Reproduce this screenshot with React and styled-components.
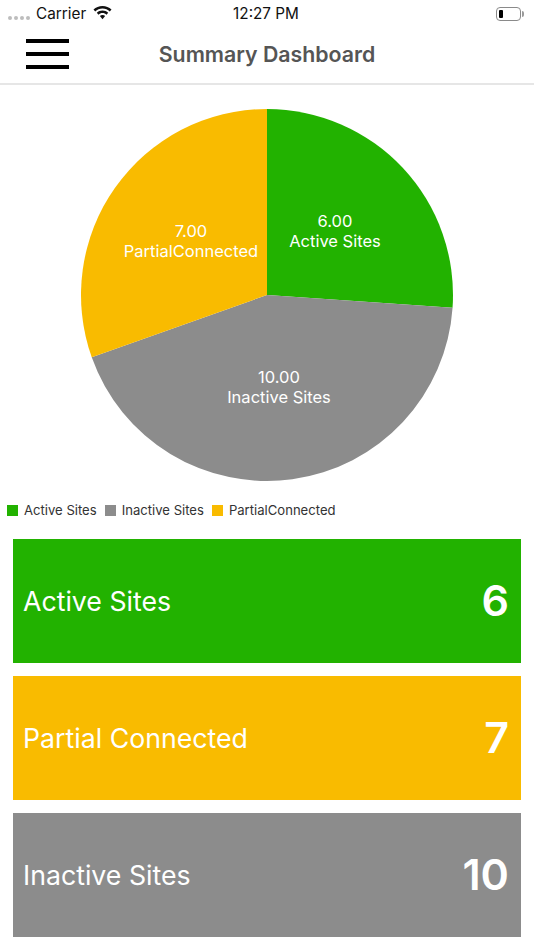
import React from 'react';
import styled, { createGlobalStyle } from 'styled-components';

const GREEN = '#22b200';
const AMBER = '#f9bb00';
const GREY = '#8c8c8c';

const slices = [
  { name: 'Active Sites', value: 6, color: GREEN },
  { name: 'Inactive Sites', value: 10, color: GREY },
  { name: 'PartialConnected', value: 7, color: AMBER }
];

const cards = [
  { name: 'Active Sites', value: 6, color: GREEN },
  { name: 'Partial Connected', value: 7, color: AMBER },
  { name: 'Inactive Sites', value: 10, color: GREY }
];

const GlobalStyle = createGlobalStyle`
  html, body {
    margin: 0;
    padding: 0;
    background: #fff;
  }
  body {
    font-family: Inter, "Liberation Sans", sans-serif;
  }
`;

const Screen = styled.div`
  width: 534px;
  height: 950px;
  display: flex;
  flex-direction: column;
  overflow: hidden;
  background: #fff;
`;

const StatusBar = styled.div`
  height: 27px;
  padding: 0 10px 0 8px;
  display: grid;
  grid-template-columns: 1fr auto 1fr;
  align-items: center;
  font-size: 15.3px;
  color: #111;
`;

const StatusLeft = styled.div`
  display: flex;
  align-items: center;
`;

const SignalDots = styled.div`
  display: flex;
  gap: 2px;
  margin: 8px 6px 0 0;
`;

const Dot = styled.span`
  width: 4px;
  height: 4px;
  border-radius: 50%;
  background: #bdbdbd;
`;

const Carrier = styled.span`
  margin-right: 7px;
`;

const Clock = styled.span`
  letter-spacing: 0;
`;

const Battery = styled.div`
  justify-self: end;
  width: 25px;
  height: 14px;
  box-sizing: border-box;
  padding: 2px;
  margin-right: 3px;
  border: 1px solid #8a8a8a;
  border-radius: 4px;
  position: relative;
  display: flex;

  &::after {
    content: '';
    position: absolute;
    right: -4px;
    top: 3px;
    width: 2px;
    height: 6px;
    border-radius: 0 2px 2px 0;
    background: #9a9a9a;
  }
`;

const BatteryLevel = styled.span`
  width: 4px;
  border-radius: 1px;
  background: #000;
`;

const NavBar = styled.header`
  height: 56px;
  border-bottom: 2px solid #e6e6e6;
  display: grid;
  grid-template-columns: 1fr auto 1fr;
  align-items: center;
  padding: 0 26px;
`;

const Burger = styled.div`
  width: 43px;
  display: flex;
  flex-direction: column;
  gap: 9px;
  margin-top: -2px;
`;

const BurgerBar = styled.span`
  height: 4px;
  background: #000;
`;

const Title = styled.h1`
  margin: 0 0 2px;
  font-size: 21.3px;
  font-weight: 600;
  color: #555;
`;

const ChartArea = styled.section`
  display: flex;
  justify-content: center;
  padding-top: 23px;
`;

const PieLabel = styled.text`
  fill: #fff;
  font-size: 16.5px;
  text-anchor: middle;
`;

const Legend = styled.div`
  display: flex;
  align-items: center;
  height: 18px;
  margin-top: 19px;
  padding-left: 7px;
  font-size: 13.1px;
  color: #333;
`;

const LegendItem = styled.div`
  display: flex;
  align-items: center;
  margin-right: 8px;
`;

const Swatch = styled.span`
  width: 11px;
  height: 11px;
  margin-right: 6px;
  background: ${p => p.$color};
`;

const Cards = styled.div`
  display: flex;
  flex-direction: column;
  gap: 13px;
  margin-top: 20px;
  padding: 0 13px;
`;

const Card = styled.div`
  height: 124px;
  padding: 0 12px 0 10px;
  display: flex;
  justify-content: space-between;
  align-items: center;
  color: #fff;
  background: ${p => p.$color};
`;

const CardName = styled.span`
  font-size: 26.7px;
`;

const CardValue = styled.span`
  padding-bottom: 2px;
  font-size: 43px;
  font-weight: 600;
`;

const WifiGlyph = styled.svg`
  margin-top: -2px;
`;

function WifiIcon() {
  return (
    <WifiGlyph width="19" height="14" viewBox="0 0 19 14">
      <path
        d="M9.5 0C6 0 2.9 1.3.5 3.5L2.2 5.4C4.1 3.6 6.7 2.5 9.5 2.5s5.4 1.1 7.3 2.9l1.7-1.9C16.1 1.3 13 0 9.5 0z"
        fill="#111"
      />
      <path
        d="M9.5 4.6c-2.2 0-4.2.8-5.7 2.2l1.7 1.9c1-1 2.5-1.6 4-1.6s3 .6 4 1.6l1.7-1.9c-1.5-1.4-3.5-2.2-5.7-2.2z"
        fill="#111"
      />
      <path d="M9.5 9.1c-1 0-1.9.4-2.6 1l2.6 3.2 2.6-3.2c-.7-.6-1.6-1-2.6-1z" fill="#111" />
    </WifiGlyph>
  );
}

function slicePath(cx, cy, r, from, to) {
  const x1 = cx + r * Math.sin(from);
  const y1 = cy - r * Math.cos(from);
  const x2 = cx + r * Math.sin(to);
  const y2 = cy - r * Math.cos(to);
  const large = to - from > Math.PI ? 1 : 0;
  return `M${cx} ${cy}L${x1} ${y1}A${r} ${r} 0 ${large} 1 ${x2} ${y2}Z`;
}

function PieChart() {
  const total = slices.reduce((sum, s) => sum + s.value, 0);
  let angle = 0;
  const paths = slices.map(s => {
    const from = angle;
    angle += (s.value / total) * Math.PI * 2;
    return <path key={s.name} d={slicePath(187, 187, 186, from, angle)} fill={s.color} />;
  });

  return (
    <svg width="374" height="374" viewBox="0 0 374 374">
      {paths}
      <PieLabel x="255" y="119">6.00</PieLabel>
      <PieLabel x="255" y="139">Active Sites</PieLabel>
      <PieLabel x="199" y="275">10.00</PieLabel>
      <PieLabel x="199" y="295">Inactive Sites</PieLabel>
      <PieLabel x="111" y="129">7.00</PieLabel>
      <PieLabel x="111" y="149">PartialConnected</PieLabel>
    </svg>
  );
}

export default function App() {
  return (
    <Screen>
      <GlobalStyle />
      <StatusBar>
        <StatusLeft>
          <SignalDots>
            <Dot />
            <Dot />
            <Dot />
            <Dot />
          </SignalDots>
          <Carrier>Carrier</Carrier>
          <WifiIcon />
        </StatusLeft>
        <Clock>12:27 PM</Clock>
        <Battery>
          <BatteryLevel />
        </Battery>
      </StatusBar>
      <NavBar>
        <Burger>
          <BurgerBar />
          <BurgerBar />
          <BurgerBar />
        </Burger>
        <Title>Summary Dashboard</Title>
      </NavBar>
      <ChartArea>
        <PieChart />
      </ChartArea>
      <Legend>
        {slices.map(s => (
          <LegendItem key={s.name}>
            <Swatch $color={s.color} />
            {s.name}
          </LegendItem>
        ))}
      </Legend>
      <Cards>
        {cards.map(c => (
          <Card key={c.name} $color={c.color}>
            <CardName>{c.name}</CardName>
            <CardValue>{c.value}</CardValue>
          </Card>
        ))}
      </Cards>
    </Screen>
  );
}
